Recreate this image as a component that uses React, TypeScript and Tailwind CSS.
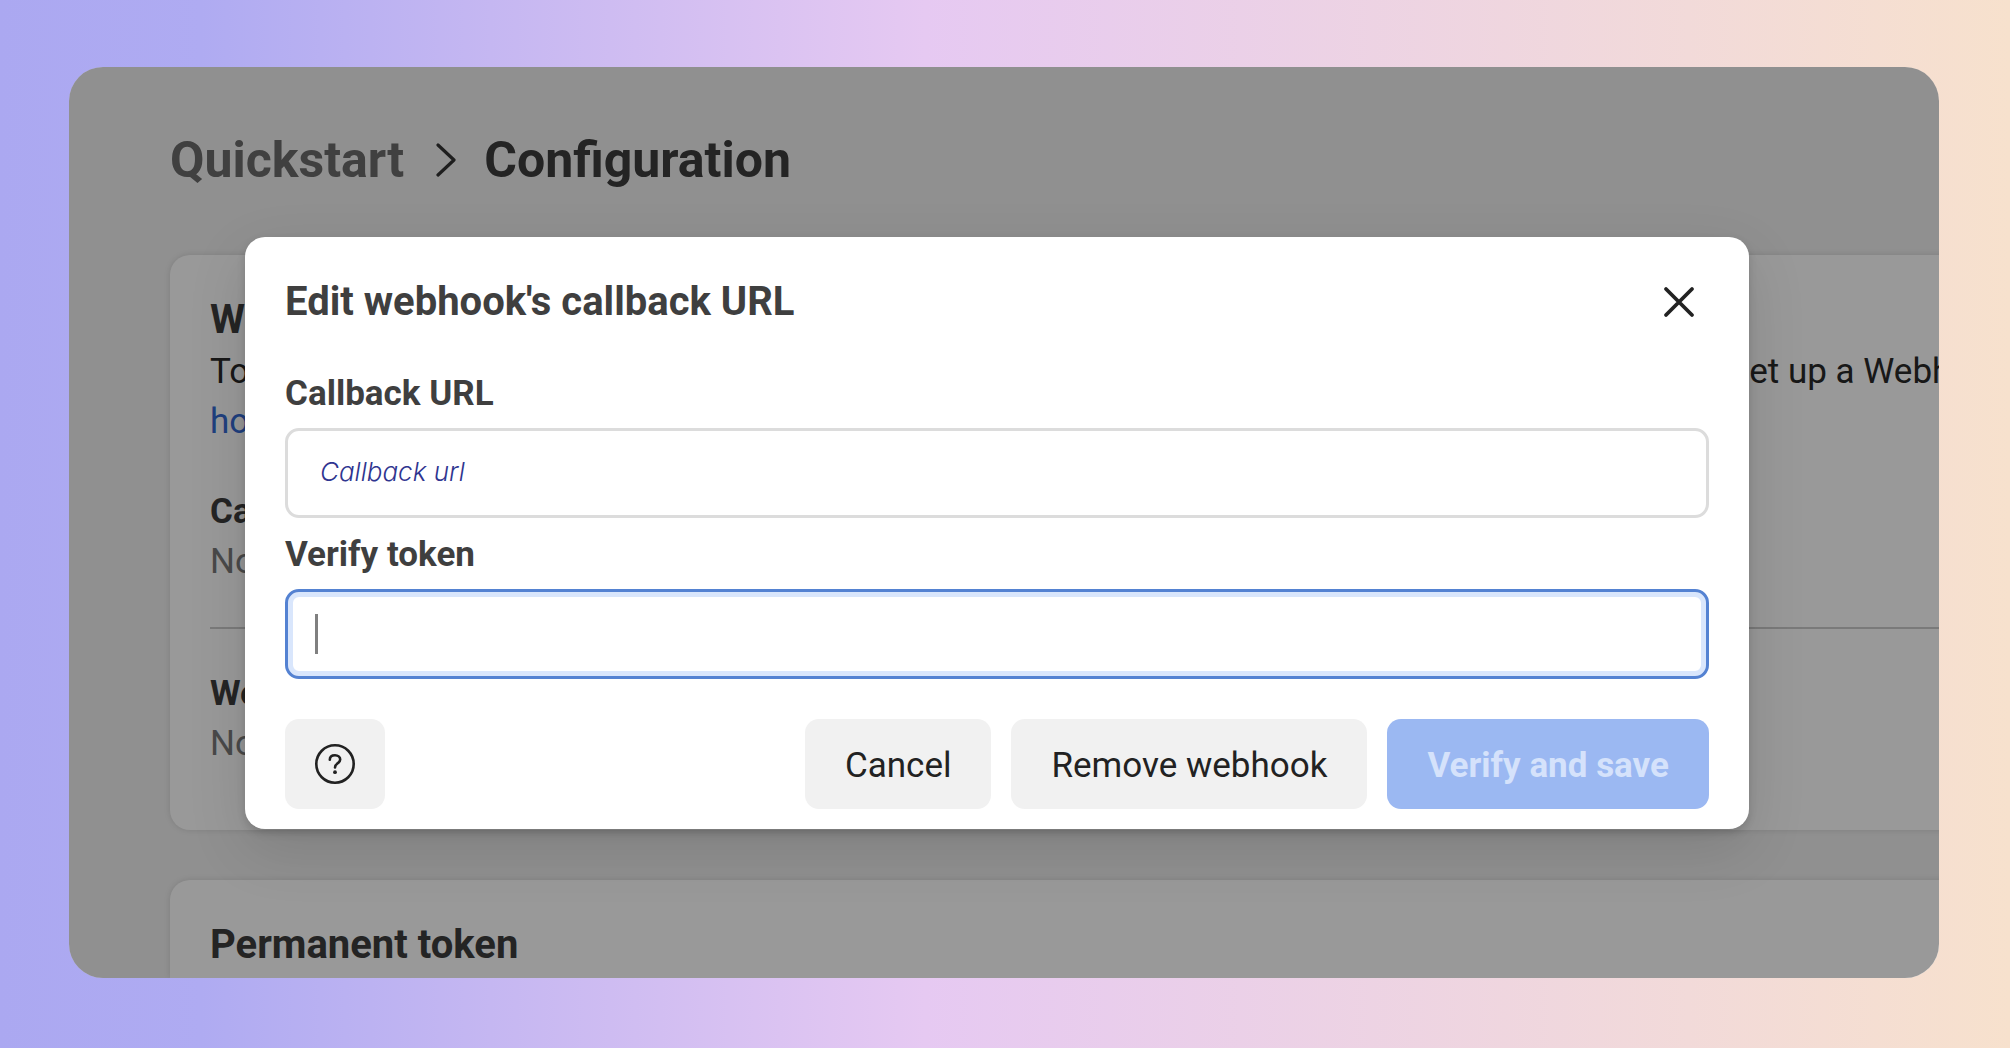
import { type ReactNode } from 'react';

type WebhookFieldProps = {
  label: string;
  value: string;
};

function WebhookField({ label, value }: WebhookFieldProps) {
  return (
    <div className="text-[35px] leading-[50px]">
      <h3 className="font-bold text-[#3c3c3c]">{label}</h3>
      <p className="text-[#7b7b7b]">{value}</p>
    </div>
  );
}

type DialogButtonProps = {
  children: ReactNode;
  onClick?: () => void;
};

function DialogButton({ children, onClick }: DialogButtonProps) {
  return (
    <button
      type="button"
      className="h-[90px] rounded-[14px] bg-[#f1f1f1] px-10 pt-1 text-[35px] whitespace-nowrap text-[#222222]"
      onClick={onClick}
    >
      {children}
    </button>
  );
}

function ConfigurationPage() {
  return (
    <main className="flex flex-1 flex-col bg-[#f0f0f0] pt-[62px] pl-[101px]">
      {/* breadcrumb */}
      <nav className="flex h-[62px] items-center text-[50px] font-bold">
        <a href="#quickstart" className="text-[#6b6b6b]">
          Quickstart
        </a>
        <svg className="mr-7 ml-8" width="20" height="36" viewBox="0 0 20 36" fill="none" aria-hidden="true">
          <path d="M2 3L18 18L2 33" stroke="#333333" strokeWidth="3.2" strokeLinecap="round" strokeLinejoin="round" />
        </svg>
        <span className="text-[#3c3c3c]">Configuration</span>
      </nav>

      {/* webhook card */}
      <section className="mt-16 h-[575px] shrink-0 rounded-l-[20px] bg-white pt-10 pl-10 shadow-[0_0_6px_rgba(0,0,0,0.12)]">
        <h2 className="text-[40px] leading-[50px] font-bold text-[#3c3c3c]">Webhook</h2>
        <p className="mt-0.5 text-[35px] leading-[50px] whitespace-nowrap text-[#282828]">
          To get alerted when you receive a message or when a message’s status has changed, you need to set up a
          Webhooks endpoint
        </p>
        <a href="#webhooks" className="text-[35px] leading-[50px] text-[#3469d2]">
          how to set up Webhooks.
        </a>
        <div className="mt-10 border-b-2 border-[#cccccc] pb-10">
          <WebhookField label="Callback URL" value="None" />
        </div>
        <div className="mt-10">
          <WebhookField label="Webhook fields" value="None" />
        </div>
      </section>

      {/* token card */}
      <section className="mt-[50px] flex-1 rounded-tl-[20px] bg-white pt-10 pl-10 shadow-[0_0_6px_rgba(0,0,0,0.12)]">
        <h2 className="text-[40px] leading-[50px] font-bold text-[#3c3c3c]">Permanent token</h2>
      </section>
    </main>
  );
}

function EditWebhookDialog() {
  return (
    <div
      role="dialog"
      aria-labelledby="dialog-title"
      className="flex-1 rounded-[20px] bg-white px-10 pt-[34px] pb-5 shadow-[0_4px_8px_rgba(0,0,0,0.14),0_20px_60px_rgba(0,0,0,0.12)]"
    >
      <header className="flex h-[62px] items-center justify-between pr-[14px]">
        <h1 id="dialog-title" className="text-[40px] font-bold text-[#3f3f3f]">
          Edit webhook's callback URL
        </h1>
        <button type="button" aria-label="Close">
          <svg width="32" height="32" viewBox="0 0 32 32" fill="none">
            <path d="M3 3L29 29M29 3L3 29" stroke="#222222" strokeWidth="3.8" strokeLinecap="round" />
          </svg>
        </button>
      </header>

      <form className="mt-9">
        <label htmlFor="callbackUrl" className="block text-[35px] leading-[50px] font-bold text-[#3f3f3f]">
          Callback URL
        </label>
        <input
          id="callbackUrl"
          type="url"
          placeholder="Callback url"
          className="mt-[9px] block h-[90px] w-full rounded-[14px] border-3 border-[#dcdcdc] bg-white px-8 pb-1 font-['Inter',sans-serif] text-[26px] font-light text-[#2f3590] italic outline-none placeholder:text-[#2f3590]"
        />

        <label htmlFor="verifyToken" className="mt-3 block text-[35px] leading-[50px] font-bold text-[#3f3f3f]">
          Verify token
        </label>
        <div className="relative mt-[9px]">
          <input
            id="verifyToken"
            type="text"
            className="block h-[90px] w-full rounded-[14px] border-3 border-[#5482d2] bg-white px-7 text-[35px] caret-transparent shadow-[inset_0_0_0_5px_#d9e6fc] outline-none"
          />
          <span className="absolute top-[25px] left-[30px] h-10 w-[3px] bg-[#808080]" />
        </div>

        <footer className="mt-10 flex items-center gap-5">
          <button
            type="button"
            aria-label="Help"
            className="flex h-[90px] w-[100px] items-center justify-center rounded-[14px] bg-[#f1f1f1]"
          >
            <svg width="40" height="40" viewBox="0 0 40 40" fill="none">
              <circle cx="20" cy="20" r="18.7" stroke="#222222" strokeWidth="2.6" />
              <path
                d="M14.8 15.8C14.8 12.8 17 11.2 20 11.2C23 11.2 25.2 13 25.2 15.6C25.2 19.4 20 19.2 20 23.4"
                stroke="#222222"
                strokeWidth="2.6"
                strokeLinecap="round"
              />
              <circle cx="20" cy="28.2" r="1.9" fill="#222222" />
            </svg>
          </button>
          <div className="ml-auto flex gap-5">
            <DialogButton>Cancel</DialogButton>
            <DialogButton>Remove webhook</DialogButton>
            <button
              type="submit"
              disabled
              className="h-[90px] rounded-[14px] bg-[#9bb8f2] px-10 pt-1 text-[35px] font-bold whitespace-nowrap text-[#d5e2fb]"
            >
              Verify and save
            </button>
          </div>
        </footer>
      </form>
    </div>
  );
}

export default function App() {
  return (
    <div className="flex min-h-screen bg-[linear-gradient(90deg,#aba8f1_0%,#afabf2_10%,#e6c9f2_46%,#f2dad9_84%,#f7e1cd_100%)] pt-[67px] pr-[71px] pb-[70px] pl-[69px] font-['Roboto',sans-serif]">
      <div className="relative flex min-w-0 flex-1 overflow-hidden rounded-[34px]">
        <ConfigurationPage />
        <div className="absolute inset-0 flex items-start bg-black/40 pt-[170px] pr-[190px] pl-[176px]">
          <EditWebhookDialog />
        </div>
      </div>
    </div>
  );
}
